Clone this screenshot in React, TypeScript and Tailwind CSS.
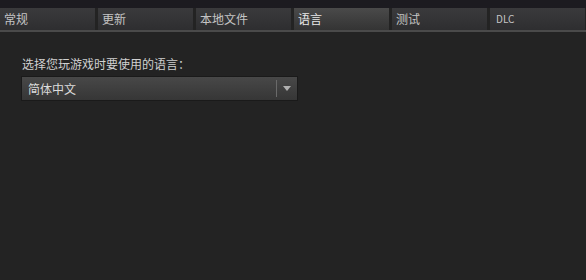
import React from "react";

const tabs = ["常规", "更新", "本地文件", "语言", "测试", "DLC"];

export default function App() {
  return (
    <div
      className="w-[586px] h-[280px] bg-[#232323] overflow-hidden text-[#c8c8c8]"
      style={{ fontFamily: '"Noto Sans CJK SC", "Liberation Sans", sans-serif' }}
    >
      <div className="h-[8px] bg-[#1c1b20]" />
      <div className="flex gap-[3px] h-[22px]">
        {tabs.map((t, i) => (
          <div
            key={t}
            className={
              "w-[95px] h-full flex items-center pl-[4px] leading-none " +
              (t === "DLC" ? "text-[10px] pl-[6px] " : "text-[12px] ") +
              (i === 3
                ? "bg-gradient-to-b from-[#4a4a4a] to-[#343434] text-[#e8e8e8]"
                : "bg-gradient-to-b from-[#3a3a3c] to-[#2e2e30] text-[#c4c4c4]")
            }
          >
            {t}
          </div>
        ))}
      </div>
      <div className="h-[2px] bg-[#4a4a4a]" />
      <div className="pl-[22px] pt-[26px]">
        <div className="text-[12px] leading-none text-[#d0d0d0]">选择您玩游戏时要使用的语言：</div>
        <div className="mt-[7px] w-[275px] h-[23px] flex items-center bg-gradient-to-b from-[#484848] to-[#363636] shadow-[0_0_0_1px_#1a1a1a]">
          <div className="flex-1 pl-[6px] text-[12px] leading-none text-[#dcdcdc]">简体中文</div>
          <div className="w-[1px] h-[17px] bg-[#6a6a6a]" />
          <div className="w-[20px] flex items-center justify-center">
            <svg width="8" height="5" viewBox="0 0 8 5">
              <path d="M0 0 L8 0 L4 5 Z" fill="#b0b0b0" />
            </svg>
          </div>
        </div>
      </div>
    </div>
  );
}
